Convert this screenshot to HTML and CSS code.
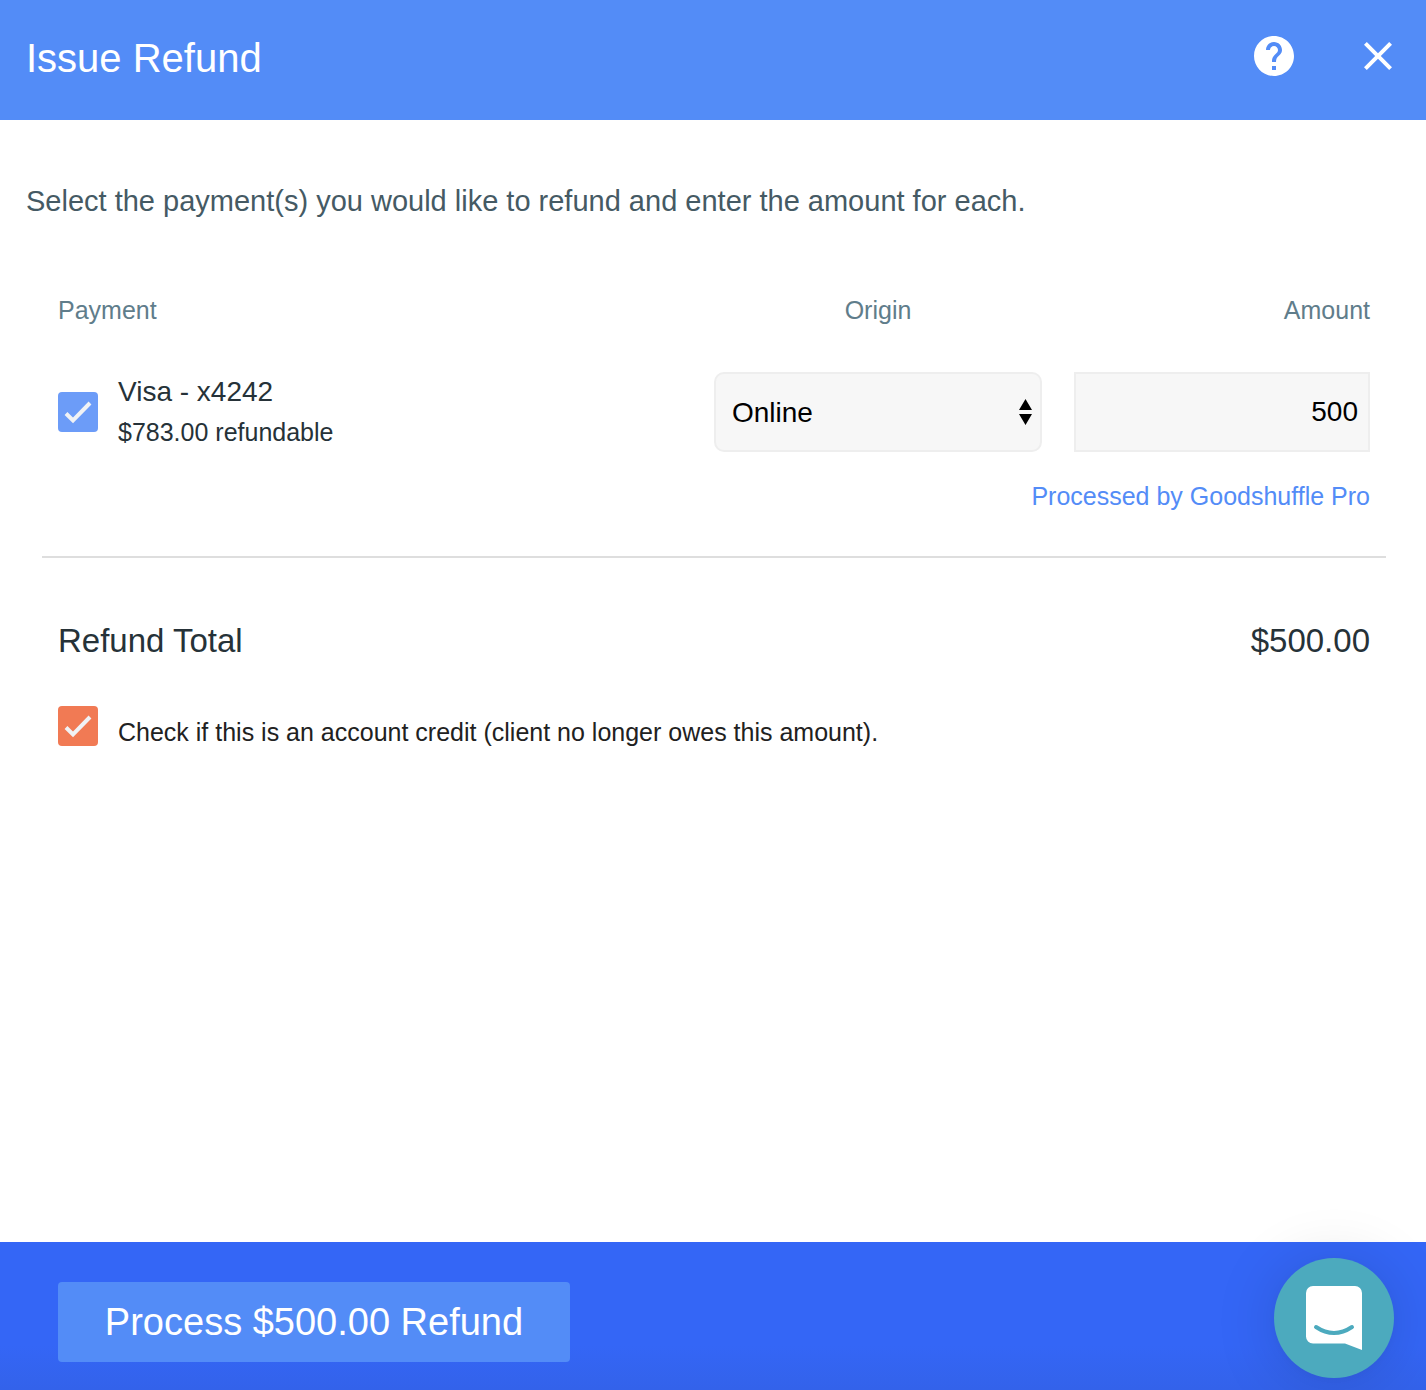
FILE: index.html
```html
<!DOCTYPE html>
<html lang="en">
<head>
    <meta charset="UTF-8">
    <meta name="viewport" content="width=device-width, initial-scale=1.0">
    <title>Issue Refund</title>
    <link rel="stylesheet" href="styles.css">
</head>
<body>
    <header class="header">
        <h1>Issue Refund</h1>
        <div class="header-actions">
            <button type="button" class="icon-button" aria-label="Help">
                <svg width="48" height="48" viewBox="0 0 24 24" fill="#fff">
                    <path d="M12 2C6.48 2 2 6.48 2 12s4.480 10 10 10 10-4.480 10-10S17.520 2 12 2zm1 17h-2v-2h2v2zm2.070-7.750l-.9.920C13.450 12.900 13 13.500 13 15h-2v-.5c0-1.100.450-2.100 1.170-2.830l1.240-1.260c.370-.360.590-.860.590-1.410 0-1.100-.9-2-2-2s-2 .9-2 2H8c0-2.210 1.790-4 4-4s4 1.790 4 4c0 .880-.360 1.680-.930 2.250z"/>
                </svg>
            </button>
            <button type="button" class="icon-button" aria-label="Close">
                <svg width="48" height="48" viewBox="0 0 24 24" fill="#fff">
                    <path d="M19 6.410L17.590 5 12 10.590 6.410 5 5 6.410 10.590 12 5 17.590 6.410 19 12 13.410 17.590 19 19 17.590 13.410 12z"/>
                </svg>
            </button>
        </div>
    </header>

    <main class="content">
        <p class="intro">Select the payment(s) you would like to refund and enter the amount for each.</p>

        <div class="refund">
            <table class="payments">
                <thead>
                    <tr>
                        <th>Payment</th>
                        <th class="col-origin">Origin</th>
                        <th class="col-amount">Amount</th>
                    </tr>
                </thead>
                <tbody>
                    <tr>
                        <td>
                            <label class="check-row payment" for="payment-1">
                                <span class="checkbox">
                                    <input type="checkbox" id="payment-1" checked>
                                    <svg viewBox="0 0 40 40"><path d="M8 21.500l7 7L32 11"/></svg>
                                </span>
                                <span>
                                    <span class="payment-name">Visa - x4242</span>
                                    <span class="payment-note">$783.00 refundable</span>
                                </span>
                            </label>
                        </td>
                        <td>
                            <div class="select">
                                <select aria-label="Origin">
                                    <option>Online</option>
                                    <option>Offline</option>
                                </select>
                                <svg width="13" height="26" viewBox="0 0 13 26"><path d="M6.500 0L13 11H0zM0 15h13L6.500 26z"/></svg>
                            </div>
                        </td>
                        <td><input type="text" class="amount" aria-label="Amount" value="500"></td>
                    </tr>
                    <tr>
                        <td colspan="3" class="processor">Processed by Goodshuffle Pro</td>
                    </tr>
                </tbody>
            </table>

            <div class="total">
                <span>Refund Total</span>
                <span>$500.00</span>
            </div>

            <label class="check-row credit" for="account-credit">
                <span class="checkbox checkbox-orange">
                    <input type="checkbox" id="account-credit" checked>
                    <svg viewBox="0 0 40 40"><path d="M8 21.500l7 7L32 11"/></svg>
                </span>
                <span class="credit-text">Check if this is an account credit (client no longer owes this amount).</span>
            </label>
        </div>
    </main>

    <footer class="footer">
        <button type="button" class="process-button">Process $500.00 Refund</button>
    </footer>

    <button type="button" class="chat-button" aria-label="Open chat">
        <svg width="56" height="64" viewBox="0 0 56 64">
            <path fill="#fff" d="M7 0h42a7 7 0 0 1 7 7v57l-17-6.500H7a7 7 0 0 1-7-7V7a7 7 0 0 1 7-7z"/>
            <path fill="none" stroke="#4caabe" stroke-width="4" stroke-linecap="round" d="M10 41q18 12 36 0"/>
        </svg>
    </button>
</body>
</html>
```

FILE: styles.css
```css
* {
    box-sizing: border-box;
}
body {
    display: flex;
    flex-direction: column;
    min-height: 100vh;
    margin: 0;
    background: #fff;
    color: #263238;
    font-family: "Helvetica Neue", "Liberation Sans", Arial, sans-serif;
    font-size: 25px;
    line-height: 40px;
}
button,
select,
input {
    font-family: inherit;
}
button {
    border: none;
    cursor: pointer;
}

/* Header */
.header {
    display: flex;
    justify-content: space-between;
    align-items: flex-start;
    height: 120px;
    padding: 32px 24px 32px 26px;
    background: #538cf7;
    color: #fff;
}
h1 {
    margin: 0;
    font-size: 40px;
    font-weight: normal;
    line-height: 52px;
}
.header-actions {
    display: flex;
    gap: 56px;
}
.icon-button {
    padding: 0;
    background: none;
}
.icon-button svg {
    display: block;
}

/* Refund form */
.content {
    flex: 1;
    padding: 60px 40px 60px 26px;
}
.intro {
    margin: 0;
    color: #455a64;
    font-size: 29px;
    line-height: 42px;
}
.refund {
    margin: 48px 0 0 16px;
}
.payments {
    width: 100%;
    table-layout: fixed;
    border-collapse: collapse;
    border-bottom: 2px solid #dedede;
}
th,
td {
    padding: 20px 16px;
    text-align: left;
}
th {
    color: #607d8b;
    font-weight: normal;
}
td {
    padding-top: 22px;
    padding-bottom: 0;
}
th.col-origin {
    width: 360px;
    text-align: center;
}
th.col-amount {
    width: 328px;
    text-align: right;
}
td.processor {
    padding-top: 24px;
    padding-bottom: 40px;
    color: #538cf7;
    text-align: right;
}
.check-row {
    display: flex;
    gap: 20px;
    cursor: pointer;
}
.payment {
    align-items: center;
}
.payment-name,
.payment-note {
    display: block;
}
.payment-name {
    font-size: 28px;
}
.checkbox {
    position: relative;
    flex: none;
    width: 40px;
    height: 40px;
}
.checkbox input {
    display: block;
    width: 40px;
    height: 40px;
    margin: 0;
    border-radius: 4px;
    background: #6c9cf8;
    appearance: none;
}
.checkbox-orange input {
    background: #f17a54;
}
.checkbox svg {
    position: absolute;
    top: 0;
    left: 0;
    fill: none;
    stroke: #f0f2f5;
    stroke-width: 4;
    pointer-events: none;
}
.select {
    position: relative;
}
.select select,
.amount {
    display: block;
    width: 100%;
    height: 80px;
    border: 2px solid #eee;
    background: #f7f7f7;
    color: #000;
    font-size: 28px;
}
.select select {
    padding: 0 16px;
    border-radius: 10px;
    appearance: none;
}
.select svg {
    position: absolute;
    top: 27px;
    right: 10px;
    pointer-events: none;
}
.amount {
    padding: 0 10px;
    border-radius: 0;
    text-align: right;
}
.total {
    display: flex;
    justify-content: space-between;
    padding: 63px 16px 0;
    font-size: 33px;
}
.credit {
    align-items: flex-end;
    margin: 45px 16px 0;
    color: #212121;
}
.credit-text {
    line-height: 28px;
}

/* Footer */
.footer {
    padding: 40px 58px 28px;
    background: linear-gradient(#3466f6 70%, #3362ea);
}
.process-button {
    width: 512px;
    max-width: 100%;
    height: 80px;
    padding: 0;
    border-radius: 4px;
    background: #538cf7;
    color: #fff;
    font-size: 38px;
}
.chat-button {
    display: flex;
    justify-content: center;
    align-items: center;
    position: fixed;
    right: 32px;
    bottom: 12px;
    width: 120px;
    height: 120px;
    padding: 0;
    border-radius: 50%;
    background: #4caabe;
    box-shadow: 0 2px 12px rgba(0, 0, 0, 0.04), 0 4px 64px rgba(0, 0, 0, 0.14);
}
```
